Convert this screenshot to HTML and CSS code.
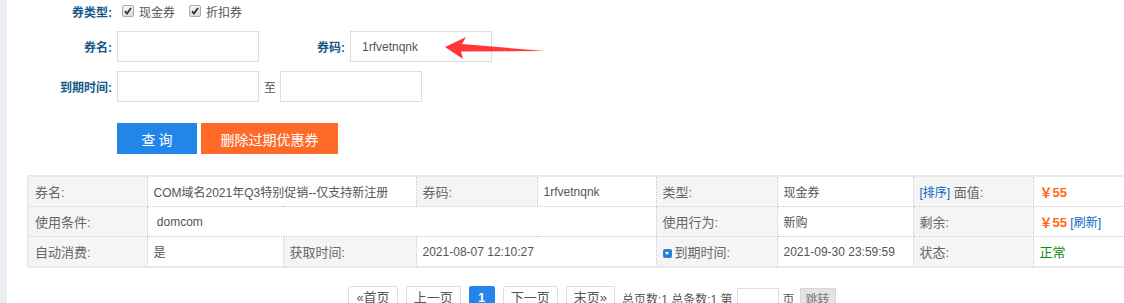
FILE: index.html
```html
<!DOCTYPE html>
<html lang="zh-CN">
<head>
    <meta charset="UTF-8">
    <title>优惠券管理</title>
    <link rel="stylesheet" href="styles.css">
</head>
<body>

<div class="page">
    <div class="side"></div>

    <div class="main">
        <!-- search form -->
        <div class="search">
            <div class="row row-type">
                <span class="lbl">券类型:</span>
                <label class="chk"><span class="box"><svg width="8" height="8" viewBox="0 0 8 8"><path d="M1 4.2 L3 6.5 L7 1" fill="none" stroke="#333" stroke-width="1.8"/></svg></span>现金券</label>
                <label class="chk"><span class="box"><svg width="8" height="8" viewBox="0 0 8 8"><path d="M1 4.2 L3 6.5 L7 1" fill="none" stroke="#333" stroke-width="1.8"/></svg></span>折扣券</label>
            </div>
            <div class="row">
                <span class="lbl">券名:</span>
                <input type="text" class="txt">
                <span class="lbl lbl-mid">券码:</span>
                <input type="text" class="txt" value="1rfvetnqnk">
            </div>
            <div class="row">
                <span class="lbl">到期时间:</span>
                <input type="text" class="txt">
                <span class="to">至</span>
                <input type="text" class="txt">
            </div>
            <div class="row row-btns">
                <button class="btn btn-query">查 询</button>
                <button class="btn btn-del">删除过期优惠券</button>
            </div>

            <!-- red annotation arrow -->
            <svg class="arrow" width="104" height="26" viewBox="0 0 104 26">
                <polygon points="1,11 22,1 18,8 100,15 17,15.5 19,23" fill="#ff3737"/>
            </svg>
        </div>

        <!-- coupon detail -->
        <table class="info">
            <colgroup>
                <col style="width:119px"><col style="width:136px"><col style="width:133px">
                <col style="width:121px"><col style="width:119px"><col style="width:121px">
                <col style="width:136px"><col style="width:120px"><col style="width:121px">
            </colgroup>
            <tr>
                <td class="th">券名:</td>
                <td colspan="2">COM域名2021年Q3特别促销--仅支持新注册</td>
                <td class="th">券码:</td>
                <td>1rfvetnqnk</td>
                <td class="th">类型:</td>
                <td>现金券</td>
                <td class="th"><a class="lnk">[排序]</a> 面值:</td>
                <td><span class="money">￥55</span></td>
            </tr>
            <tr>
                <td class="th">使用条件:</td>
                <td colspan="4">&nbsp;domcom</td>
                <td class="th">使用行为:</td>
                <td>新购</td>
                <td class="th">剩余:</td>
                <td><span class="money">￥55</span> <a class="lnk">[刷新]</a></td>
            </tr>
            <tr>
                <td class="th">自动消费:</td>
                <td>是</td>
                <td class="th">获取时间:</td>
                <td colspan="2">2021-08-07 12:10:27</td>
                <td class="th"><span class="sort-ico"></span>到期时间:</td>
                <td>2021-09-30 23:59:59</td>
                <td class="th">状态:</td>
                <td><span class="ok">正常</span></td>
            </tr>
        </table>

        <!-- pager -->
        <div class="pager">
            <a class="pg">«首页</a>
            <a class="pg">上一页</a>
            <a class="pg cur">1</a>
            <a class="pg">下一页</a>
            <a class="pg">末页»</a>
            <span class="pg-info">总页数:1 总条数:1 第</span>
            <input type="text" class="pg-input">
            <span class="pg-info">页</span>
            <button class="pg-go">跳转</button>
        </div>
    </div>
</div>

</body>
</html>
```

FILE: styles.css
```css
html, body {
    margin: 0;
    padding: 0;
    overflow: hidden;
    background: #fff;
}
body {
    font-family: "Liberation Sans", Arial, "Noto Sans CJK SC", sans-serif;
    font-size: 12px;
    color: #555;
}
.page {
    display: flex;
    min-height: 320px;
}
.side {
    width: 7px;
    flex: none;
    background: #eaedf2;
}
.main {
    flex: 1;
    min-width: 0;
}
.search {
    position: relative;
}
.row {
    display: flex;
    align-items: center;
    height: 31px;
}
.row-type {
    height: 22px;
    margin-bottom: 9px;
}
.row + .row {
    margin-top: 9px;
}
.row-type + .row {
    margin-top: 0;
}
.lbl {
    width: 105px;
    padding-right: 5px;
    text-align: right;
    font-weight: bold;
    color: #15598a;
    font-size: 12px;
}
.lbl-mid {
    width: 86px;
}
.chk {
    display: flex;
    align-items: center;
    margin-left: 5px;
    margin-right: 9px;
    color: #555;
    font-size: 12px;
}
.chk .box {
    width: 10px;
    height: 10px;
    border: 1px solid #aaa;
    border-radius: 2px;
    background: linear-gradient(#f6f6f6, #dcdcdc);
    display: flex;
    align-items: center;
    justify-content: center;
    margin-right: 5px;
}
.txt {
    width: 142px;
    height: 31px;
    box-sizing: border-box;
    border: 1px solid #ddd;
    padding: 0 11px;
    font-family: "Liberation Sans", Arial, sans-serif;
    font-size: 12px;
    color: #555;
    outline: none;
}
.to {
    margin: 0 4px 0 5px;
    color: #555;
    font-size: 12px;
}
.row-btns {
    margin-top: 21px !important;
    padding-left: 110px;
}
.btn {
    height: 31px;
    border: none;
    color: #fff;
    font-family: "Noto Sans CJK SC", sans-serif;
    font-size: 14px;
    padding: 0;
    cursor: pointer;
}
.btn-query {
    width: 80px;
    background: #2286e9;
    margin-right: 4px;
}
.btn-del {
    width: 137px;
    background: #ff6a28;
}
.arrow {
    position: absolute;
    left: 437px;
    top: 36px;
}
.info {
    margin: 21px 0 0 20px;
    width: 1126px;
    table-layout: fixed;
    border-collapse: collapse;
    border: 2px solid #e9e9e9;
}
.info td {
    height: 29px;
    padding: 0 6px;
    border: 1px dotted #c8c8c8;
    white-space: nowrap;
    overflow: hidden;
    font-size: 12px;
    color: #555;
}
.info td.th {
    background: #f5f5f5;
    font-size: 13px;
    color: #666;
}
.lnk {
    color: #0a64c8;
    font-size: 12px;
}
.money {
    color: #ff6a1a;
    font-weight: bold;
    font-size: 13px;
}
.ok {
    color: #0a8a0a;
    font-size: 13px;
}
.sort-ico {
    display: inline-block;
    width: 9px;
    height: 9px;
    border-radius: 2px;
    background: #2b7fd4;
    margin-right: 3px;
    vertical-align: -1px;
    position: relative;
}
.sort-ico::after {
    content: "";
    position: absolute;
    left: 2px;
    top: 3px;
    border-left: 2.5px solid transparent;
    border-right: 2.5px solid transparent;
    border-top: 3px solid #fff;
}
.pager {
    width: 1126px;
    margin: 18px 0 0 20px;
    display: flex;
    justify-content: center;
    align-items: center;
}
.pg {
    display: inline-block;
    height: 22px;
    line-height: 22px;
    padding: 0 7px;
    margin: 0 4px;
    border: 1px solid #ddd;
    border-radius: 2px;
    font-size: 13px;
    color: #555;
}
.pg.cur {
    width: 24px;
    padding: 0;
    text-align: center;
    background: #2286e9;
    border-color: #2286e9;
    color: #fff;
    font-weight: bold;
}
.pg-info {
    margin: 0 3px;
    font-size: 12px;
    color: #555;
}
.pg-input {
    width: 42px;
    height: 20px;
    box-sizing: border-box;
    border: 1px solid #ddd;
    margin: 0 1px;
}
.pg-go {
    height: 20px;
    padding: 0 5px;
    margin-left: 2px;
    border: 1px solid #d6d6d6;
    background: #e4e4e4;
    color: #777;
    font-family: "Noto Sans CJK SC", sans-serif;
    font-size: 12px;
}
```
